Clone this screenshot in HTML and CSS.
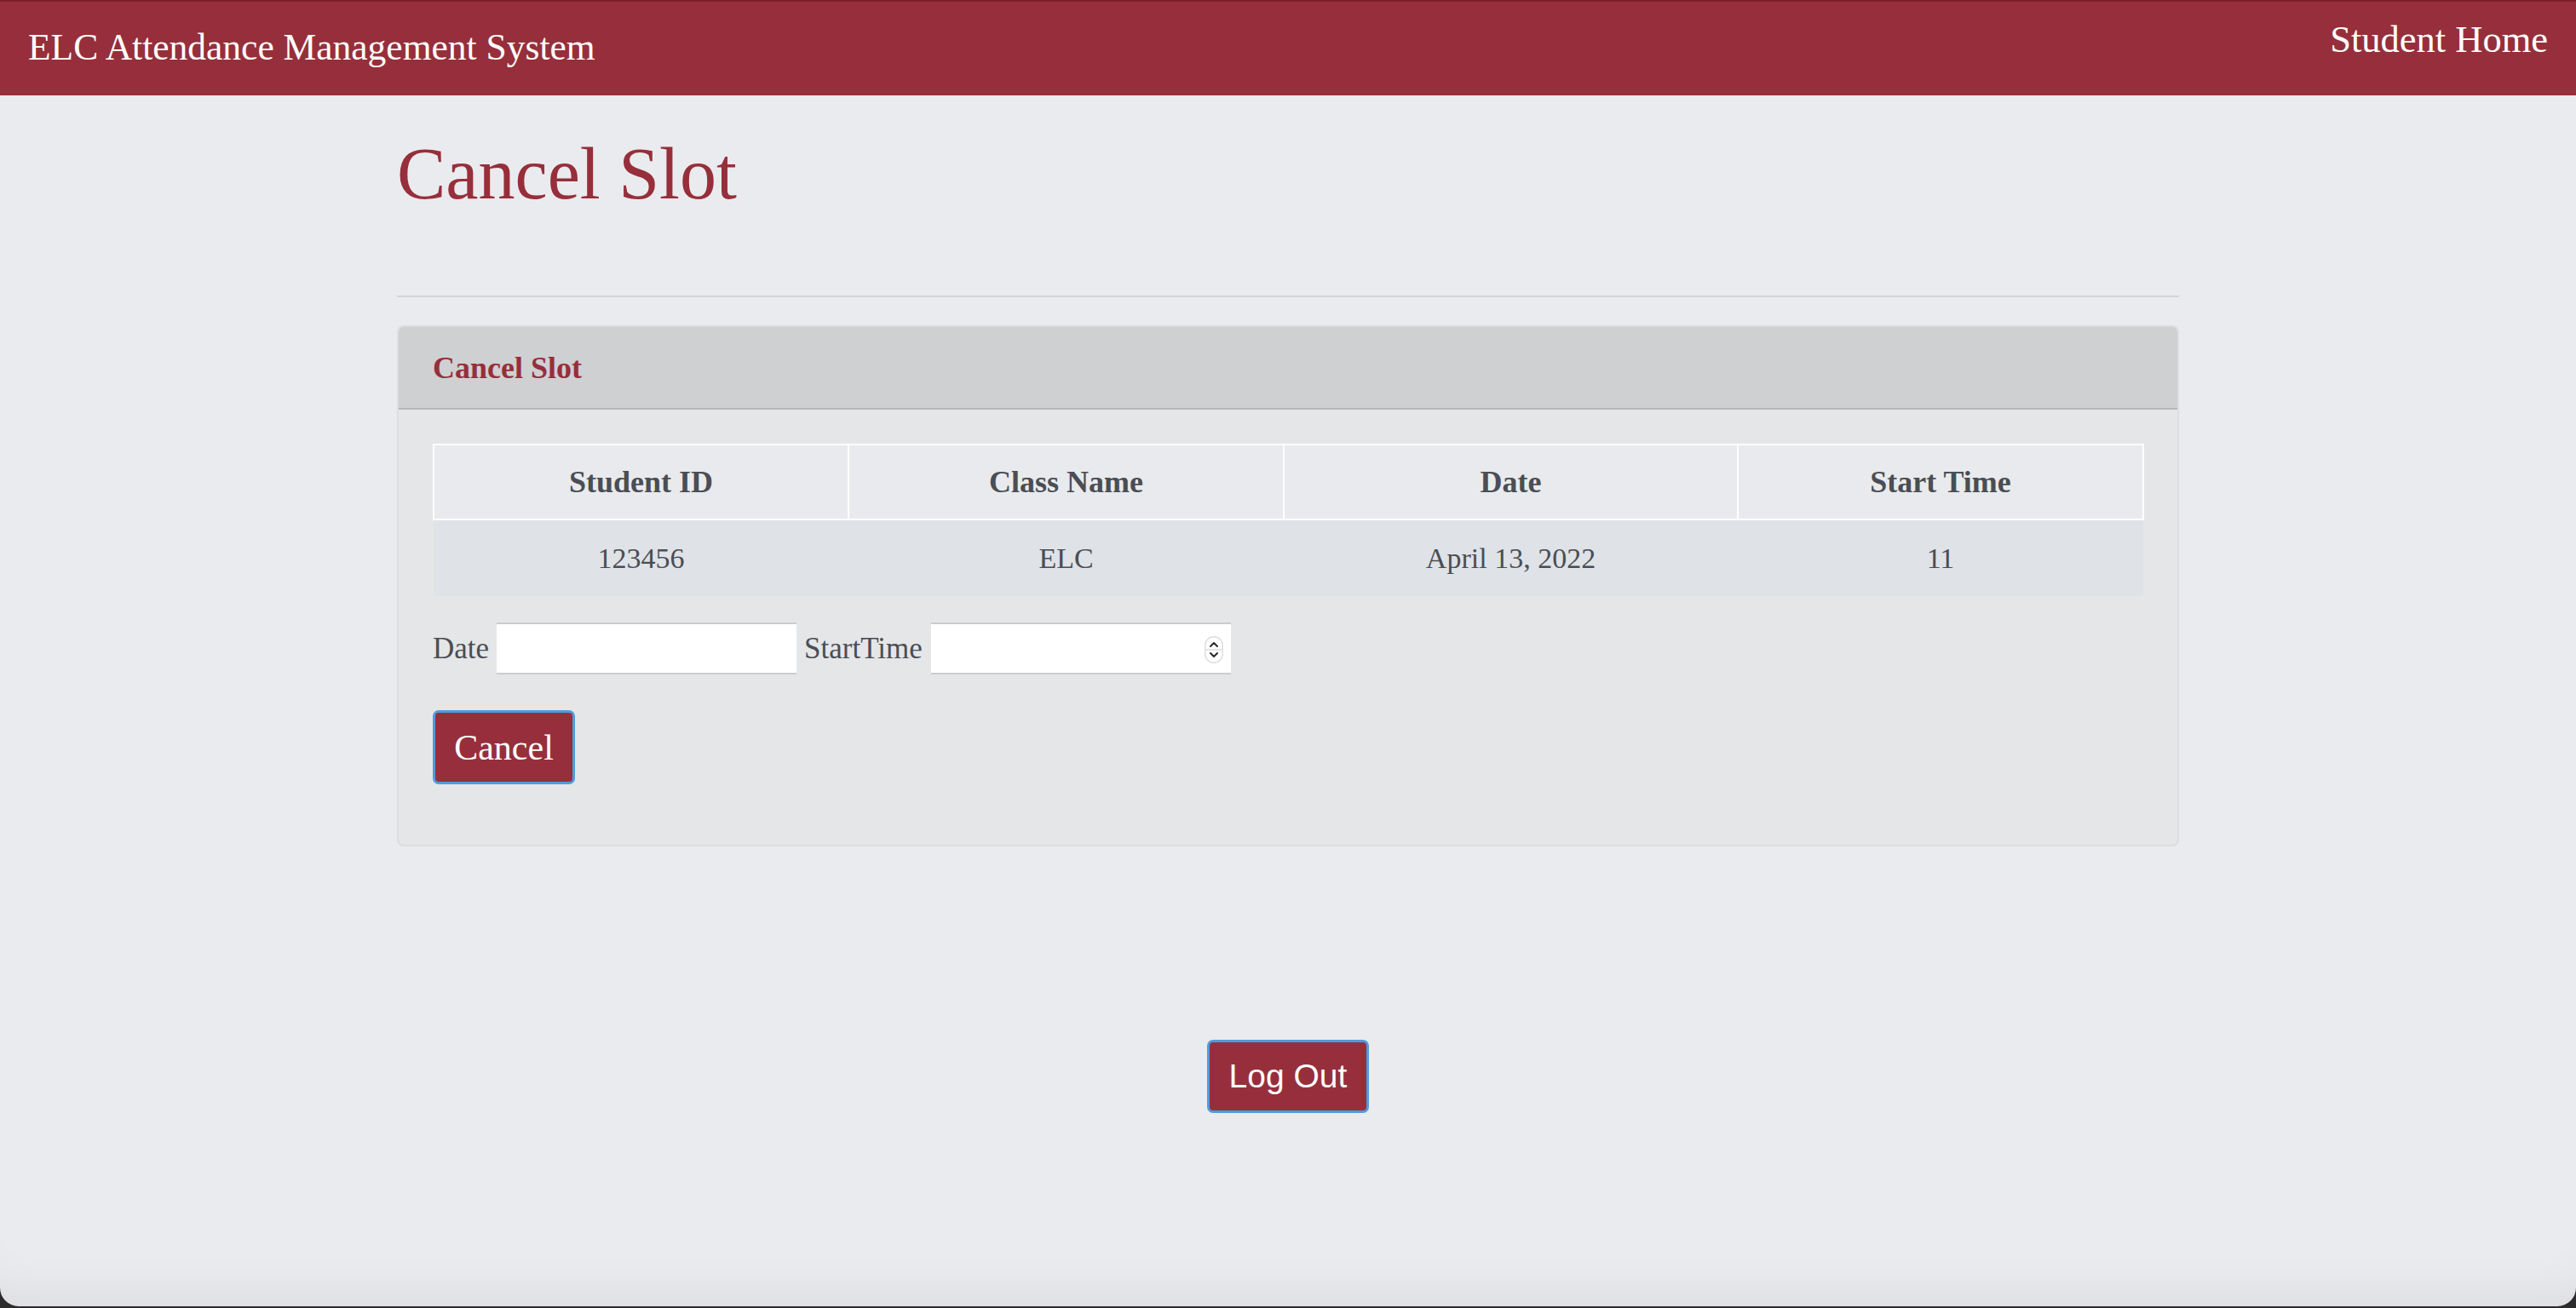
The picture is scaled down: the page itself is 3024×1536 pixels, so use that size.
FILE: index.html
```html
<!DOCTYPE html>
<html lang="en">
<head>
<meta charset="utf-8">
<title>Cancel Slot</title>
<link rel="stylesheet" href="styles.css">
</head>
<body>
<div class="window">
  <nav class="navbar">
    <span class="brand">ELC Attendance Management System</span>
    <a class="nav-link" href="#">Student Home</a>
  </nav>
  <main class="container">
    <h1 class="page-title">Cancel Slot</h1>
    <hr class="divider">
    <section class="card">
      <div class="card-header">Cancel Slot</div>
      <div class="card-body">
        <table class="slots">
          <colgroup>
            <col class="col-id">
            <col class="col-class">
            <col class="col-date">
            <col class="col-time">
          </colgroup>
          <thead>
            <tr>
              <th>Student ID</th>
              <th>Class Name</th>
              <th>Date</th>
              <th>Start Time</th>
            </tr>
          </thead>
          <tbody>
            <tr>
              <td>123456</td>
              <td>ELC</td>
              <td>April 13, 2022</td>
              <td>11</td>
            </tr>
          </tbody>
        </table>
        <form class="cancel-form">
          <div class="fields">
            <label class="field-label" for="date">Date</label>
            <input class="field-input" id="date" type="text">
            <label class="field-label" for="start">StartTime</label>
            <span class="time-wrap">
              <input class="field-input" id="start" type="text">
              <span class="spinner">
                <svg viewBox="0 0 22 32" width="22" height="32" aria-hidden="true">
                  <rect x="0.75" y="0.75" width="20.5" height="30.5" rx="10" fill="#fff" stroke="#dedede" stroke-width="1.5"/>
                  <line x1="1" y1="16" x2="21" y2="16" stroke="#dcdcdc" stroke-width="1.5"/>
                  <path d="M7 12 L11 8 L15 12" fill="none" stroke="#2b2b2b" stroke-width="2" stroke-linecap="round" stroke-linejoin="round"/>
                  <path d="M7 20 L11 24 L15 20" fill="none" stroke="#2b2b2b" stroke-width="2" stroke-linecap="round" stroke-linejoin="round"/>
                </svg>
              </span>
            </span>
          </div>
          <button class="btn btn-serif" type="button">Cancel</button>
        </form>
      </div>
    </section>
    <div class="logout-row">
      <button class="btn btn-sans" type="button">Log Out</button>
    </div>
  </main>
</div>
</body>
</html>
```
FILE: styles.css
```css
html {
  background: #2c2c2c;
}
body {
  margin: 0;
  font-family: "Liberation Serif", "Times New Roman", serif;
  color: #4a4e54;
}
.window {
  height: 1534px;
  background: #eaebee;
  border-radius: 0 0 22px 22px;
  box-shadow: inset 0 -60px 60px -50px rgba(0, 0, 0, 0.07);
  overflow: hidden;
}
.navbar {
  display: flex;
  justify-content: space-between;
  align-items: flex-start;
  height: 110px;
  border-top: 2px solid #7c1d28;
  background: #962f3b;
  padding: 0 33px;
}
.brand {
  font-size: 43.5px;
  line-height: 1;
  padding-top: 32px;
  color: #fff;
}
.nav-link {
  font-size: 44.5px;
  line-height: 1;
  padding-top: 22px;
  color: #fff;
  text-decoration: none;
}
.container {
  width: 2092px;
  margin: 0 auto;
}
.page-title {
  margin: 49px 0 0;
  font-size: 86px;
  line-height: 1;
  font-weight: normal;
  color: #962f3b;
}
.divider {
  margin: 100px 0 0;
  border: 0;
  height: 2px;
  background: #d3d4d7;
}
.card {
  margin-top: 33px;
  border: 2px solid #dcdddf;
  border-radius: 8px;
  background: #e5e6e8;
  overflow: hidden;
}
.card-header {
  display: flex;
  align-items: center;
  height: 95px;
  padding: 0 40px;
  background: #cfd0d2;
  border-bottom: 2px solid #b5b6b9;
  font-size: 36px;
  font-weight: bold;
  color: #962f3b;
}
.card-body {
  padding: 40px 40px 71px;
}
.slots {
  width: 100%;
  border-collapse: collapse;
  table-layout: fixed;
}
.col-id { width: 487px; }
.col-class { width: 511px; }
.col-date { width: 533px; }
.col-time { width: 476px; }
.slots th {
  height: 86px;
  padding: 0;
  border: 2px solid #fff;
  background: #e9eaed;
  font-size: 36px;
  font-weight: bold;
  text-align: center;
  color: #4a4e54;
}
.slots td {
  height: 89px;
  padding: 0;
  background: #dfe2e7;
  font-size: 34px;
  text-align: center;
  color: #4a4e54;
}
.cancel-form {
  margin-top: 31px;
}
.fields {
  display: flex;
  align-items: center;
  gap: 9px;
}
.field-label {
  font-size: 35px;
  color: #4a4e54;
}
.field-input {
  box-sizing: border-box;
  width: 352px;
  height: 61px;
  margin: 0;
  border: 0;
  border-top: 2px solid #cbccce;
  border-bottom: 2px solid #cbccce;
  background: #fff;
  font-size: 32px;
  font-family: inherit;
  outline: none;
}
.time-wrap {
  position: relative;
  display: block;
  margin-left: 1px;
}
.spinner {
  position: absolute;
  right: 9px;
  top: 16px;
  width: 22px;
  height: 32px;
  display: block;
}
.spinner svg {
  display: block;
}
.btn {
  box-sizing: border-box;
  height: 87px;
  border: 3px solid #4f9be0;
  border-radius: 7px;
  background: #962f3b;
  color: #fff;
  padding: 0 22px;
  cursor: pointer;
}
.btn-serif {
  margin-top: 42px;
  font-family: "Liberation Serif", "Times New Roman", serif;
  font-size: 42px;
  width: 167px;
}
.btn-sans {
  font-family: "Liberation Sans", Arial, sans-serif;
  font-size: 39px;
  width: 190px;
  height: 86px;
}
.logout-row {
  display: flex;
  justify-content: center;
  margin-top: 227px;
}
```
